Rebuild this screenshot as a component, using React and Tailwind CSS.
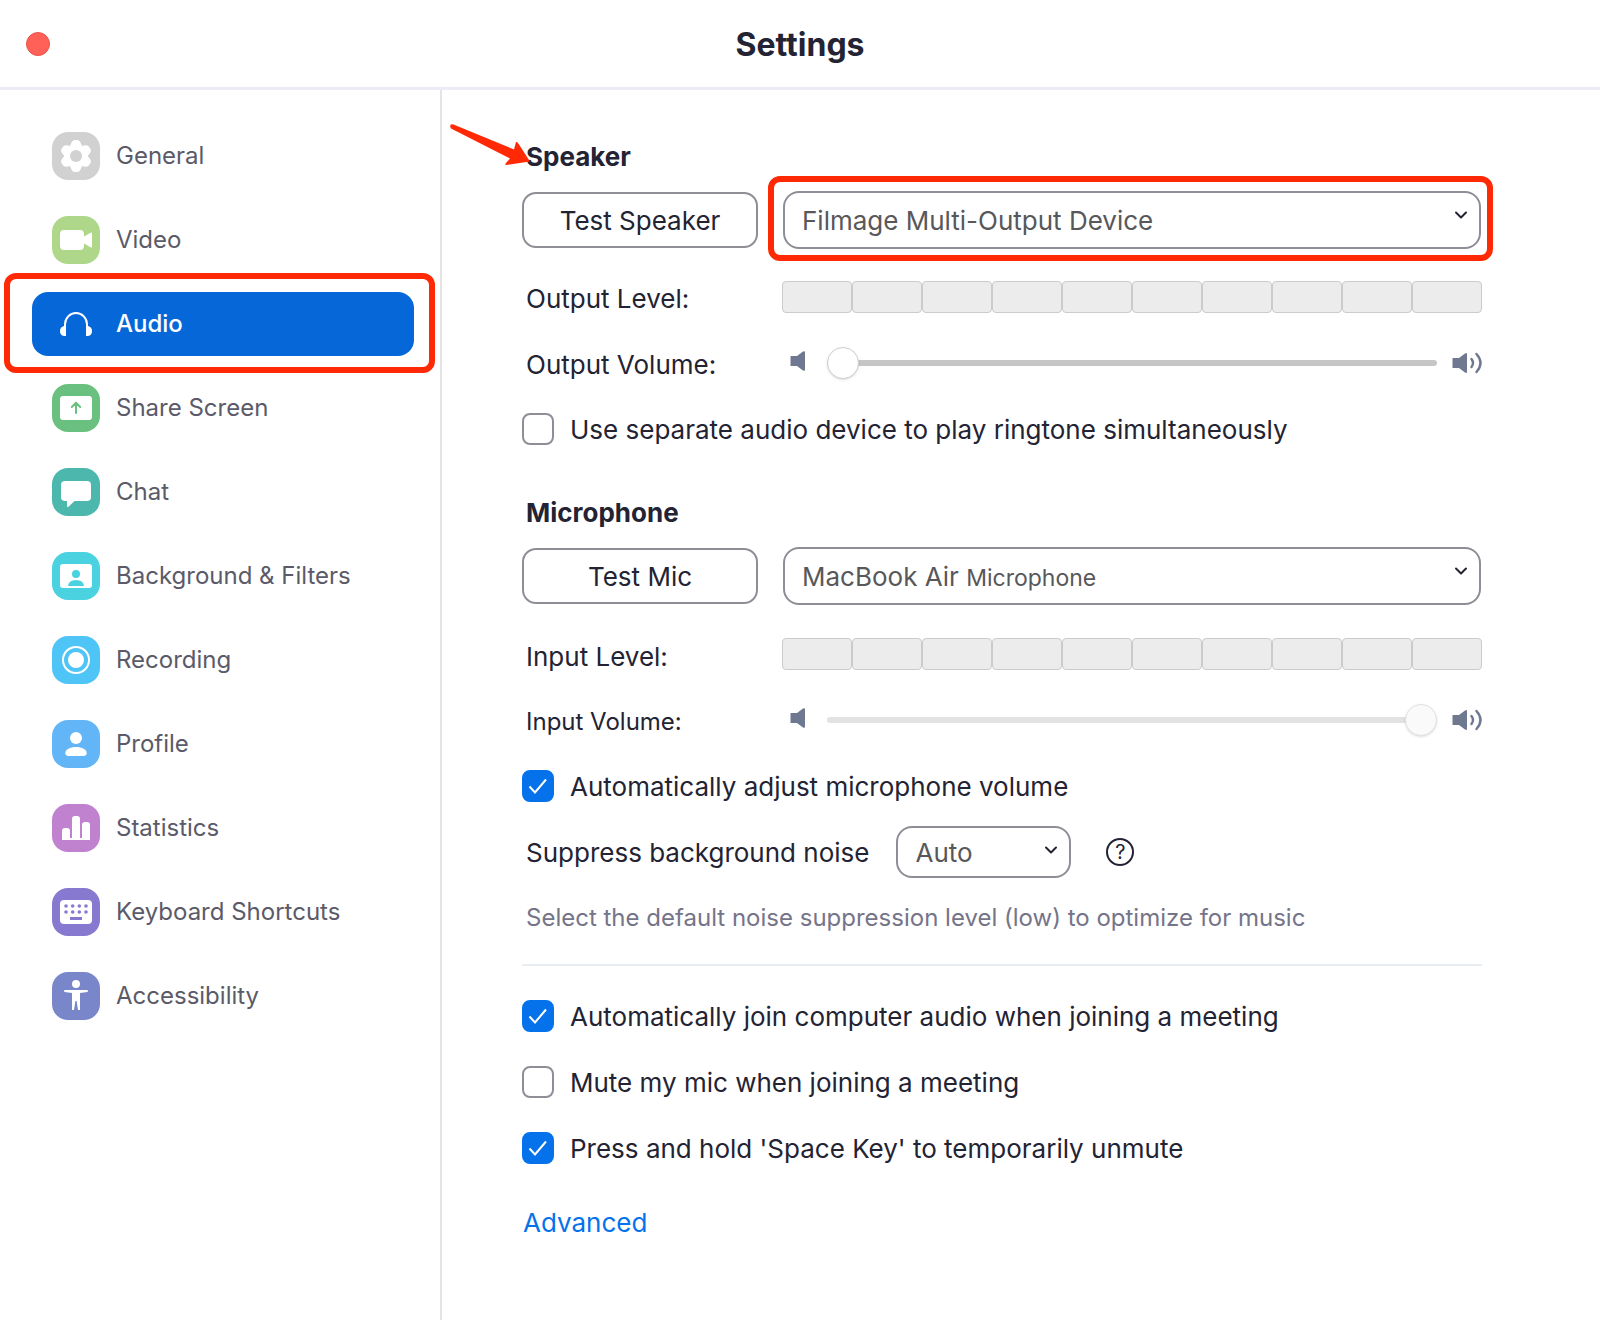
import React from 'react';

const NAV_ITEMS = [
    { id: 'general', label: 'General', color: 'bg-[#d1d1d1]', icon: <GearIcon /> },
    { id: 'video', label: 'Video', color: 'bg-[#afd789]', icon: <VideoIcon /> },
    { id: 'audio', label: 'Audio', color: 'bg-transparent', icon: <HeadphonesIcon /> },
    { id: 'share', label: 'Share Screen', color: 'bg-[#6ac17f]', icon: <ShareIcon /> },
    { id: 'chat', label: 'Chat', color: 'bg-[#4cb7ad]', icon: <ChatIcon /> },
    { id: 'background', label: 'Background & Filters', color: 'bg-[#4bd2e1]', icon: <BackgroundIcon /> },
    { id: 'recording', label: 'Recording', color: 'bg-[#4fc4f7]', icon: <RecordingIcon /> },
    { id: 'profile', label: 'Profile', color: 'bg-[#62b5f7]', icon: <ProfileIcon /> },
    { id: 'statistics', label: 'Statistics', color: 'bg-[#c082cf]', icon: <StatisticsIcon /> },
    { id: 'keyboard', label: 'Keyboard Shortcuts', color: 'bg-[#8879d0]', icon: <KeyboardIcon /> },
    { id: 'accessibility', label: 'Accessibility', color: 'bg-[#7986ca]', icon: <AccessibilityIcon /> },
];

function Icon({ children }) {
    return (
        <svg viewBox="0 0 48 48" className="size-12" fill="#fff" aria-hidden="true">
            {children}
        </svg>
    );
}

function GearIcon() {
    return (
        <Icon>
            {[0, 60, 120, 180, 240, 300].map(deg => (
                <path key={deg} d="M17.5 16 L19 11.5 Q20.3 8 23 8 H25 Q27.7 8 29 11.5 L30.5 16 L24 24 Z" transform={`rotate(${deg} 24 24)`} />
            ))}
            <circle cx="24" cy="24" r="11.5" />
            <circle cx="24" cy="24" r="6" fill="#d1d1d1" />
        </Icon>
    );
}

function VideoIcon() {
    return (
        <Icon>
            <rect x="8" y="14" width="24" height="20" rx="4" />
            <path d="M32 20.5 L38.5 16.8 Q40 16.2 40 17.5 V30.5 Q40 31.8 38.5 31.2 L32 27.5 Z" />
        </Icon>
    );
}

function HeadphonesIcon() {
    return (
        <Icon>
            <path d="M13 28 V24.5 A11 11.5 0 0 1 35 24.5 V28" fill="none" stroke="#fff" strokeWidth="2" />
            <path d="M14 26 V36 H12 Q8 35.5 8 31 Q8 27 12 26 Z" />
            <path d="M34 26 V36 H36 Q40 35.5 40 31 Q40 27 36 26 Z" />
        </Icon>
    );
}

function ShareIcon() {
    return (
        <Icon>
            <rect x="8" y="12" width="32" height="24" rx="3" />
            <path d="M24 29 V19.5 M19.8 23 L24 18.8 L28.2 23" fill="none" stroke="#6ac17f" strokeWidth="2" strokeLinecap="round" strokeLinejoin="round" />
        </Icon>
    );
}

function ChatIcon() {
    return (
        <Icon>
            <rect x="9" y="13" width="30" height="20" rx="4" />
            <path d="M15 32 V38.5 Q15.5 39.5 16.5 38.8 L22.5 33 Z" />
        </Icon>
    );
}

function BackgroundIcon() {
    return (
        <Icon>
            <rect x="8" y="12" width="32" height="24" rx="3" />
            <circle cx="24" cy="22" r="4" fill="#4bd2e1" />
            <path d="M16 34 Q16.5 28 24 28 Q31.5 28 32 34 Z" fill="#4bd2e1" />
        </Icon>
    );
}

function RecordingIcon() {
    return (
        <Icon>
            <circle cx="24" cy="24" r="13" fill="none" stroke="#fff" strokeWidth="2" />
            <circle cx="24" cy="24" r="8" />
        </Icon>
    );
}

function ProfileIcon() {
    return (
        <Icon>
            <circle cx="24" cy="18" r="6" />
            <path d="M24 27 C30 27 34.7 29.5 34.7 33 Q34.7 36 31.5 36 H16.5 Q13.3 36 13.3 33 C13.3 29.5 18 27 24 27 Z" />
        </Icon>
    );
}

function StatisticsIcon() {
    return (
        <Icon>
            <path d="M10 36 V27 Q10 24 13 24 H15 Q18 24 18 27 V34 H20 V15 Q20 12 23 12 H25 Q28 12 28 15 V34 H30 V21 Q30 18 33 18 H35 Q38 18 38 21 V36 Z" />
        </Icon>
    );
}

function KeyboardIcon() {
    return (
        <Icon>
            <rect x="8" y="12" width="32" height="24" rx="4" />
            <g fill="#8879d0">
                {[14, 20.7, 27.3, 34].map(x => (
                    <React.Fragment key={x}>
                        <circle cx={x} cy="18" r="1.8" />
                        <circle cx={x} cy="24" r="1.8" />
                    </React.Fragment>
                ))}
                <rect x="18" y="29" width="12" height="3" />
            </g>
        </Icon>
    );
}

function AccessibilityIcon() {
    return (
        <Icon>
            <circle cx="24" cy="12" r="4" />
            <path d="M12.5 18 H35.5 Q36.5 19 35.5 20 L28 21 V38 H26 L24.6 29 H23.4 L22 38 H20 V21 L12.5 20 Q11.5 19 12.5 18 Z" />
        </Icon>
    );
}

function NavItem({ item, active }) {
    return (
        <li className="relative">
            <a
                href={`#${item.id}`}
                aria-current={active ? 'page' : undefined}
                className={`flex h-16 items-center gap-4 rounded-2xl pl-5 text-2xl ${active ? 'bg-[#0668d8] font-medium text-white' : 'text-[#5b5a69]'}`}
            >
                <span className={`size-12 shrink-0 rounded-2xl ${item.color}`}>{item.icon}</span>
                {item.label}
            </a>
            {active && <span className="pointer-events-none absolute -top-[19px] -right-[21px] -bottom-[17px] -left-7 rounded-xl border-6 border-[#ff2a05]" />}
        </li>
    );
}

function Chevron({ className }) {
    return (
        <svg viewBox="0 0 14 10" className={`pointer-events-none absolute h-[10px] w-[14px] ${className}`} fill="none" stroke="#232333" strokeWidth="2" strokeLinecap="round" strokeLinejoin="round" aria-hidden="true">
            <path d="M2 2.5 L7 7.5 L12 2.5" />
        </svg>
    );
}

function TestButton({ children }) {
    return (
        <button type="button" className="h-14 rounded-[14px] border-2 border-[#8e8e96] text-[26px] text-[#232333]">
            {children}
        </button>
    );
}

function LevelMeter() {
    return (
        <div className="grid grid-cols-10">
            {Array.from({ length: 10 }, (_, i) => (
                <span key={i} className="h-8 rounded-sm border border-[#cbcbcb] bg-[#ececec]" />
            ))}
        </div>
    );
}

function VolumeSlider({ id, value, disabled }) {
    return (
        <div className="flex items-center pl-2">
            <svg viewBox="0 0 16 24" className="h-6 w-4 shrink-0" fill="#6e7890" aria-hidden="true">
                <path d="M1 5 H7 L13 0.6 Q15 -0.6 15 1.5 V18.5 Q15 20.6 13 19.4 L7 15 H1 Q0.5 15 0.5 14.5 V5.5 Q0.5 5 1 5 Z" />
            </svg>
            <input
                id={id}
                type="range"
                min="0"
                max="100"
                defaultValue={value}
                disabled={disabled}
                className={`mr-[15px] ml-[21px] h-1.5 min-w-0 flex-1 appearance-none rounded-full [&::-webkit-slider-thumb]:size-8 [&::-webkit-slider-thumb]:appearance-none [&::-webkit-slider-thumb]:rounded-full [&::-webkit-slider-thumb]:border [&::-webkit-slider-thumb]:shadow-sm ${disabled ? 'bg-[#e2e2e2] [&::-webkit-slider-thumb]:border-[#e2e2e2] [&::-webkit-slider-thumb]:bg-[#fafafa]' : 'bg-[#c6c6c6] [&::-webkit-slider-thumb]:border-[#cfcfcf] [&::-webkit-slider-thumb]:bg-white'}`}
            />
            <svg viewBox="0 0 30 22" className="h-[22px] w-[30px] shrink-0" fill="#6e7890" aria-hidden="true">
                <path d="M1 6 H7 L13 1.4 Q15 0.2 15 2.2 V19.8 Q15 21.8 13 20.6 L7 16 H1 Q0.5 16 0.5 15.5 V6.5 Q0.5 6 1 6 Z" />
                <path d="M19.5 7 Q22.5 11 19.5 15 M24.5 2 Q32.5 11 24.5 20" fill="none" stroke="#6e7890" strokeWidth="2.4" strokeLinecap="round" />
            </svg>
        </div>
    );
}

function CheckRow({ id, label, checked }) {
    return (
        <div className="flex h-[66px] items-center gap-4">
            <span className="relative size-8 shrink-0">
                <input
                    id={id}
                    type="checkbox"
                    defaultChecked={checked}
                    className="peer block size-8 appearance-none rounded-lg border-2 border-[#8e8e96] checked:border-[#0572ec] checked:bg-[#0572ec]"
                />
                <svg viewBox="0 0 32 32" className="pointer-events-none absolute inset-0 hidden size-8 peer-checked:block" fill="none" stroke="#fff" strokeWidth="2" aria-hidden="true">
                    <path d="M7.5 16.5 L13 22.5 L24 9.5" />
                </svg>
            </span>
            <label htmlFor={id} className="text-[#232333]">{label}</label>
        </div>
    );
}

export default function App() {
    return (
        <div className="flex min-h-screen flex-col bg-white font-['Inter','Liberation_Sans',sans-serif] text-[26px]">
            <header className="relative flex h-[90px] items-center justify-center border-b-3 border-[#ebecf5]">
                <button type="button" aria-label="Close" className="absolute left-[26px] size-6 rounded-full border border-[#e8534b] bg-[#ff6058]" />
                <h1 className="pt-0.5 text-[32px] font-bold text-[#232333]">Settings</h1>
            </header>

            <div className="flex flex-1">
                <nav className="w-[442px] shrink-0 border-r-2 border-[#e4e4e7] pt-[34px] pr-[26px] pl-8">
                    <ul className="space-y-5">
                        {NAV_ITEMS.map(item => (
                            <NavItem key={item.id} item={item} active={item.id === 'audio'} />
                        ))}
                    </ul>
                </nav>

                <main className="relative min-w-0 flex-1 pt-[47px] pr-[118px] pb-12 pl-20">
                    {/* arrow that points at the Speaker heading */}
                    <svg viewBox="0 0 84 44" className="absolute top-[32px] left-[6px] z-10 h-11 w-[84px]" fill="#ff2a05" aria-hidden="true">
                        <path d="M5.5 2.5 L66 27.5 L68 20 Q69 19.5 70 21 L82 39.5 L58 43 Q56.5 42.5 58 41 L62 36.5 L3 6.5 Q0.5 1.5 5.5 2.5 Z" />
                    </svg>

                    <section>
                        <h2 className="h-10 pl-1 leading-10 font-bold text-[#232333]">Speaker</h2>
                        <div className="mt-[14px] grid grid-cols-[236px_1fr] items-center gap-x-6">
                            <TestButton>Test Speaker</TestButton>
                            <div className="relative mx-px">
                                <select aria-label="Speaker device" className="block h-[58px] w-full appearance-none rounded-2xl border-2 border-[#8e8e96] bg-white pl-[17px] text-[#58585a]">
                                    <option>Filmage Multi-Output Device</option>
                                </select>
                                <Chevron className="top-[19px] right-[13px]" />
                                <span className="pointer-events-none absolute -top-[15px] -right-3 -bottom-3 -left-[15px] rounded-xl border-6 border-[#ff2a05]" />
                            </div>
                        </div>
                        <div className="mt-[15px] grid grid-cols-[236px_1fr] gap-x-6">
                            <div className="flex h-[66px] items-center pt-0.5 pl-1 text-[#232333]">Output Level:</div>
                            <div className="grid items-center"><LevelMeter /></div>
                            <label htmlFor="output-volume" className="flex h-[66px] items-center pt-0.5 pl-1 text-[#232333]">Output Volume:</label>
                            <VolumeSlider id="output-volume" value={0} />
                        </div>
                        <CheckRow id="separate-device" label="Use separate audio device to play ringtone simultaneously" />
                    </section>

                    <section className="mt-[31px]">
                        <h2 className="h-10 pl-1 leading-10 font-bold text-[#232333]">Microphone</h2>
                        <div className="mt-[14px] grid grid-cols-[236px_1fr] items-center gap-x-6">
                            <TestButton>Test Mic</TestButton>
                            <div className="relative mx-px flex items-center">
                                <select aria-label="Microphone device" className="block h-[58px] w-full appearance-none rounded-2xl border-2 border-[#8e8e96] bg-white pl-[17px] text-transparent">
                                    <option>MacBook Air Microphone</option>
                                </select>
                                <span className="pointer-events-none absolute left-[19px] text-[#58585a]" aria-hidden="true">
                                    MacBook Air <span className="text-[23px]">Microphone</span>
                                </span>
                                <Chevron className="top-[19px] right-[13px]" />
                            </div>
                        </div>
                        <div className="mt-4 grid grid-cols-[236px_1fr] gap-x-6">
                            <div className="flex h-[66px] items-center pt-1 pl-1 text-[#232333]">Input Level:</div>
                            <div className="grid items-center"><LevelMeter /></div>
                            <label htmlFor="input-volume" className="flex h-[66px] items-center pt-1 pl-1 text-2xl text-[#232333]">Input Volume:</label>
                            <VolumeSlider id="input-volume" value={100} disabled />
                        </div>
                        <CheckRow id="auto-adjust" label="Automatically adjust microphone volume" checked />
                        <div className="flex h-[66px] items-center pl-1">
                            <label htmlFor="noise" className="text-[#232333]">Suppress background noise</label>
                            <div className="relative ml-[27px]">
                                <select id="noise" className="block h-[52px] w-[175px] appearance-none rounded-2xl border-2 border-[#8e8e96] bg-white pl-[17px] text-[#58585a]">
                                    <option>Auto</option>
                                </select>
                                <Chevron className="top-[19px] right-[13px]" />
                            </div>
                            <button type="button" aria-label="Help" className="ml-[35px] flex size-7 items-center justify-center rounded-full border-2 border-[#232333] text-xl text-[#232333]">
                                ?
                            </button>
                        </div>
                        <p className="flex h-[66px] items-center pl-1 text-2xl text-[#757489]">Select the default noise suppression level (low) to optimize for music</p>
                    </section>

                    <section className="mt-[13px] border-t-2 border-[#e9eef3] pt-[17px]">
                        <CheckRow id="auto-join" label="Automatically join computer audio when joining a meeting" checked />
                        <CheckRow id="mute-mic" label="Mute my mic when joining a meeting" />
                        <CheckRow id="space-key" label="Press and hold 'Space Key' to temporarily unmute" checked />
                        <a href="#advanced" className="mt-[22px] block h-10 pl-px leading-10 text-[#0572ec]">Advanced</a>
                    </section>
                </main>
            </div>
        </div>
    );
}
